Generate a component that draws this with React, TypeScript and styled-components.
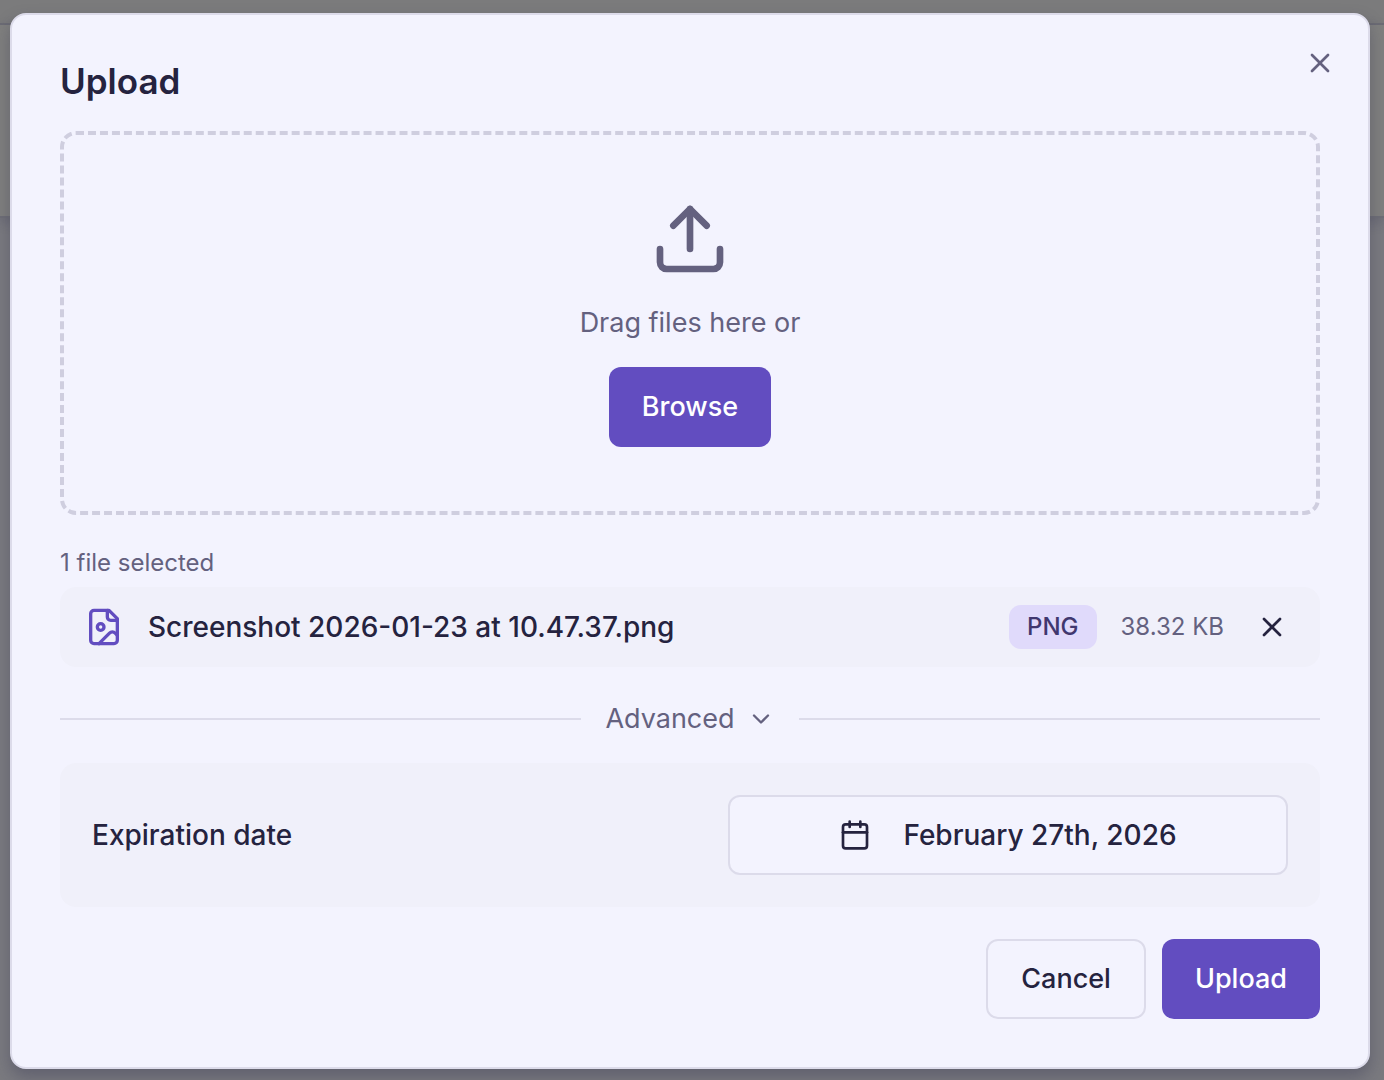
import React from "react";
import styled, { createGlobalStyle } from "styled-components";
import { Calendar, ChevronDown, Upload, X } from "lucide-react";

const color = {
  surface: "#f3f3fe",
  panel: "#f0f0fa",
  border: "#dcdbea",
  dash: "#cfcedf",
  text: "#25233f",
  muted: "#64617f",
  primary: "#624dc0",
  badge: "#e0dafb",
  badgeText: "#40376f",
};

const GlobalStyle = createGlobalStyle`
  *, *::before, *::after { box-sizing: border-box; }
  body {
    margin: 0;
    font-family: Inter, "Liberation Sans", sans-serif;
    color: ${color.text};
    -webkit-font-smoothing: antialiased;
  }
  button { font: inherit; cursor: pointer; }
`;

const Page = styled.div`
  display: grid;
  min-height: 100vh;
  grid-template-rows: 25px 193px 1fr;
  background: #7a7a7f;
`;

const PageBar = styled.div`
  grid-column: 1;
  grid-row: 1;
  background: #7b7b7c;
  border-bottom: 2px solid #6e6e76;
`;

const PageHeader = styled.div`
  grid-column: 1;
  grid-row: 2;
  background: #7f7f7e;
  border-bottom: 2px solid #6e6e76;
  box-shadow: 0 4px 12px rgba(40, 40, 70, 0.2);
`;

const Overlay = styled.div`
  grid-column: 1;
  grid-row: 1 / -1;
  z-index: 1;
  padding: 13px 14px 11px 10px;
`;

const Dialog = styled.section`
  display: flex;
  flex-direction: column;
  padding: 48px;
  background: ${color.surface};
  border: 2px solid ${color.border};
  border-radius: 16px;
  box-shadow: 0 8px 16px rgba(50, 50, 80, 0.35);
`;

const Header = styled.header`
  display: flex;
  justify-content: space-between;
  align-items: flex-start;
  height: 68px;
`;

const Title = styled.h2`
  margin: 0;
  font-size: 35px;
  line-height: 36px;
  font-weight: 600;
`;

const IconButton = styled.button<{ $muted?: boolean }>`
  display: flex;
  padding: 0;
  border: 0;
  background: none;
  color: ${(p) => (p.$muted ? color.muted : color.text)};
`;

const CloseButton = styled(IconButton)`
  margin: -16px -16px 0 0;
`;

const DropZone = styled.div`
  display: flex;
  flex-direction: column;
  align-items: center;
  padding: 64px 0;
  border: 4px dashed ${color.dash};
  border-radius: 16px;
  color: ${color.muted};
`;

const DropText = styled.p`
  margin: 24px 0;
  font-size: 27px;
  line-height: 40px;
`;

const Button = styled.button<{ $primary?: boolean }>`
  height: 80px;
  padding: 0 33px;
  border: ${(p) => (p.$primary ? "0" : `2px solid ${color.border}`)};
  border-radius: 12px;
  background: ${(p) => (p.$primary ? color.primary : color.surface)};
  color: ${(p) => (p.$primary ? "#ffffff" : color.text)};
  font-size: 27px;
  line-height: 40px;
  font-weight: 500;
`;

const Count = styled.p`
  margin: 32px 0 8px;
  font-size: 24px;
  line-height: 32px;
  color: ${color.muted};
`;

const FileRow = styled.div`
  display: flex;
  align-items: center;
  height: 80px;
  padding: 0 32px 0 24px;
  border-radius: 16px;
  background: ${color.panel};
`;

const FileName = styled.span`
  flex: 1;
  margin-left: 24px;
  font-size: 28px;
  line-height: 40px;
  font-weight: 500;
`;

const Badge = styled.span`
  padding: 6px 18px;
  border-radius: 12px;
  background: ${color.badge};
  color: ${color.badgeText};
  font-size: 24px;
  line-height: 32px;
  font-weight: 500;
`;

const FileSize = styled.span`
  margin: 0 32px 0 24px;
  font-size: 24px;
  line-height: 32px;
  color: ${color.muted};
`;

const Divider = styled.div`
  display: flex;
  align-items: center;
  gap: 24px;
  margin: 32px 0 24px;

  &::before,
  &::after {
    content: "";
    flex: 1;
    height: 2px;
    background: ${color.border};
  }
`;

const Toggle = styled.button`
  display: flex;
  align-items: center;
  gap: 12px;
  padding: 0;
  border: 0;
  background: none;
  color: ${color.muted};
  font-size: 27px;
  line-height: 40px;
`;

const Settings = styled.div`
  display: flex;
  align-items: center;
  justify-content: space-between;
  padding: 32px;
  border-radius: 16px;
  background: ${color.panel};
`;

const Label = styled.label`
  font-size: 28px;
  line-height: 40px;
  font-weight: 500;
`;

const DateButton = styled(Button)`
  display: flex;
  align-items: center;
  justify-content: center;
  gap: 32px;
  width: 560px;
  font-size: 28px;
`;

const Footer = styled.footer`
  display: flex;
  justify-content: flex-end;
  gap: 16px;
  margin-top: 32px;
`;

const FileImageIcon = () => (
  <svg
    width="40"
    height="40"
    viewBox="0 0 24 24"
    fill="none"
    stroke={color.primary}
    strokeWidth="2"
    strokeLinecap="round"
    strokeLinejoin="round"
    aria-hidden="true"
  >
    <path d="M15 2H6a2 2 0 0 0-2 2v16a2 2 0 0 0 2 2h12a2 2 0 0 0 2-2V7Z" />
    <path d="M14 2v4a2 2 0 0 0 2 2h4" />
    <circle cx="10" cy="12" r="2" />
    <path d="m20 17-1.296-1.296a2.41 2.41 0 0 0-3.408 0L9 22" />
  </svg>
);

export default function App() {
  return (
    <>
      <GlobalStyle />
      <Page>
        <PageBar />
        <PageHeader />
        <Overlay>
          <Dialog role="dialog" aria-labelledby="upload-title">
            <Header>
              <Title id="upload-title">Upload</Title>
              <CloseButton $muted type="button" aria-label="Close">
                <X size={32} />
              </CloseButton>
            </Header>
            <DropZone>
              <Upload size={80} />
              <DropText>Drag files here or</DropText>
              <Button $primary type="button">Browse</Button>
            </DropZone>
            <Count>1 file selected</Count>
            <FileRow>
              <FileImageIcon />
              <FileName>Screenshot 2026-01-23 at 10.47.37.png</FileName>
              <Badge>PNG</Badge>
              <FileSize>38.32 KB</FileSize>
              <IconButton type="button" aria-label="Remove file">
                <X size={32} />
              </IconButton>
            </FileRow>
            <Divider>
              <Toggle type="button" aria-expanded="true">
                Advanced
                <ChevronDown size={28} />
              </Toggle>
            </Divider>
            <Settings>
              <Label htmlFor="expiration">Expiration date</Label>
              <DateButton id="expiration" type="button">
                <Calendar size={32} />
                February 27th, 2026
              </DateButton>
            </Settings>
            <Footer>
              <Button type="button">Cancel</Button>
              <Button $primary type="button">Upload</Button>
            </Footer>
          </Dialog>
        </Overlay>
      </Page>
    </>
  );
}
